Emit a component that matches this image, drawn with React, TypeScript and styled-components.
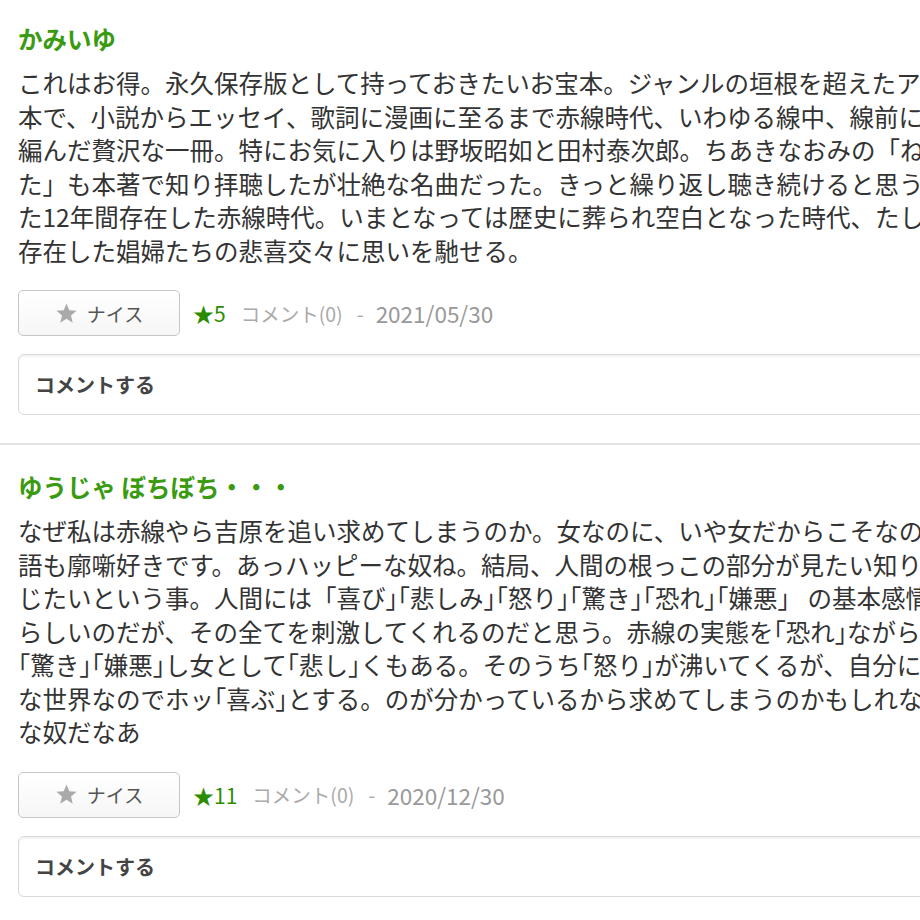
import React from "react";
import styled, { createGlobalStyle } from "styled-components";

const Global = createGlobalStyle`
  html, body { margin: 0; padding: 0; background: #fff; overflow: hidden; }
  body {
    font-family: "Noto Sans CJK JP", "Noto Sans", sans-serif;
    color: #333;
  }
`;

const List = styled.div`
  width: 1300px;
`;

const Item = styled.article`
  padding: 25px 0 28px 18px;
  border-bottom: 2px solid #e2e2e2;
  &:first-child { padding-top: 22px; }
`;

const Name = styled.h3`
  margin: 0 0 10px;
  font-size: 24.5px;
  line-height: 34px;
  font-weight: 700;
  color: #3a9a10;
`;

const Body = styled.div`
  margin: 0 0 23px;
  font-size: 24.5px;
  line-height: 33.5px;
  color: #333;
  white-space: nowrap;
`;

const Line = styled.span`
  display: block;
`;

const Actions = styled.div`
  display: flex;
  align-items: center;
  height: 46px;
`;

const NiceButton = styled.button`
  box-sizing: border-box;
  width: 162px;
  height: 46px;
  margin: 0 13px 0 0;
  padding: 0;
  display: flex;
  align-items: center;
  justify-content: center;
  gap: 9px;
  border: 1px solid #c6c6c6;
  border-radius: 5px;
  background: linear-gradient(#ffffff, #f6f6f6);
  font-family: inherit;
  font-size: 19px;
  color: #555;
`;

const Score = styled.span`
  font-size: 21px;
  color: #2a8c00;
`;

const Count = styled.span`
  margin-left: 15px;
  font-size: 19.5px;
  color: #aaa;
`;

const Dash = styled.span`
  margin: 0 12px 0 14px;
  font-size: 20px;
  color: #aaa;
`;

const DateText = styled.span`
  font-size: 22.5px;
  color: #999;
`;

const CommentBox = styled.div`
  box-sizing: border-box;
  margin-top: 18px;
  height: 61px;
  display: flex;
  align-items: center;
  padding-left: 16px;
  border: 1px solid #d9d9d9;
  border-radius: 6px;
  box-shadow: inset 0 2px 2px rgba(0, 0, 0, 0.05);
  font-size: 20px;
  font-weight: 700;
  color: #444;
`;

const Star = ({ size = 23, color = "#aaa" }: { size?: number; color?: string }) => (
  <svg width={size} height={size} viewBox="0 0 24 24" aria-hidden="true">
    <polygon
      points="12,1.5 14.9,8.6 22.5,9.2 16.7,14.1 18.5,21.6 12,17.6 5.5,21.6 7.3,14.1 1.5,9.2 9.1,8.6"
      fill={color}
    />
  </svg>
);

type Review = {
  name: string;
  lines: string[];
  score: number;
  date: string;
};

const reviews: Review[] = [
  {
    name: "かみいゆ",
    lines: [
      "これはお得。永久保存版として持っておきたいお宝本。ジャンルの垣根を超えたアンソロジー",
      "本で、小説からエッセイ、歌詞に漫画に至るまで赤線時代、いわゆる線中、線前に書かれた作品を",
      "編んだ贅沢な一冊。特にお気に入りは野坂昭如と田村泰次郎。ちあきなおみの「ねえあんた」",
      "た」も本著で知り拝聴したが壮絶な名曲だった。きっと繰り返し聴き続けると思う。",
      "た12年間存在した赤線時代。いまとなっては歴史に葬られ空白となった時代、たしかに",
      "存在した娼婦たちの悲喜交々に思いを馳せる。",
    ],
    score: 5,
    date: "2021/05/30",
  },
  {
    name: "ゆうじゃ ぼちぼち・・・",
    lines: [
      "なぜ私は赤線やら吉原を追い求めてしまうのか。女なのに、いや女だからこそなのか。",
      "語も廓噺好きです。あっハッピーな奴ね。結局、人間の根っこの部分が見たい知りた",
      "じたいという事。人間には「喜び｣｢悲しみ｣｢怒り｣｢驚き｣｢恐れ｣｢嫌悪」 の基本感情が",
      "らしいのだが、その全てを刺激してくれるのだと思う。赤線の実態を｢恐れ｣ながら",
      "｢驚き｣｢嫌悪｣し女として｢悲し｣くもある。そのうち｢怒り｣が沸いてくるが、自分には",
      "な世界なのでホッ｢喜ぶ｣とする。のが分かっているから求めてしまうのかもしれない。",
      "な奴だなあ",
    ],
    score: 11,
    date: "2020/12/30",
  },
];

export default function App() {
  return (
    <>
      <Global />
      <List>
        {reviews.map((r) => (
          <Item key={r.name}>
            <Name>{r.name}</Name>
            <Body>
              {r.lines.map((l, i) => (
                <Line key={i}>{l}</Line>
              ))}
            </Body>
            <Actions>
              <NiceButton type="button">
                <Star />
                <span>ナイス</span>
              </NiceButton>
              <Score>★{r.score}</Score>
              <Count>コメント(0)</Count>
              <Dash>-</Dash>
              <DateText>{r.date}</DateText>
            </Actions>
            <CommentBox>コメントする</CommentBox>
          </Item>
        ))}
      </List>
    </>
  );
}
